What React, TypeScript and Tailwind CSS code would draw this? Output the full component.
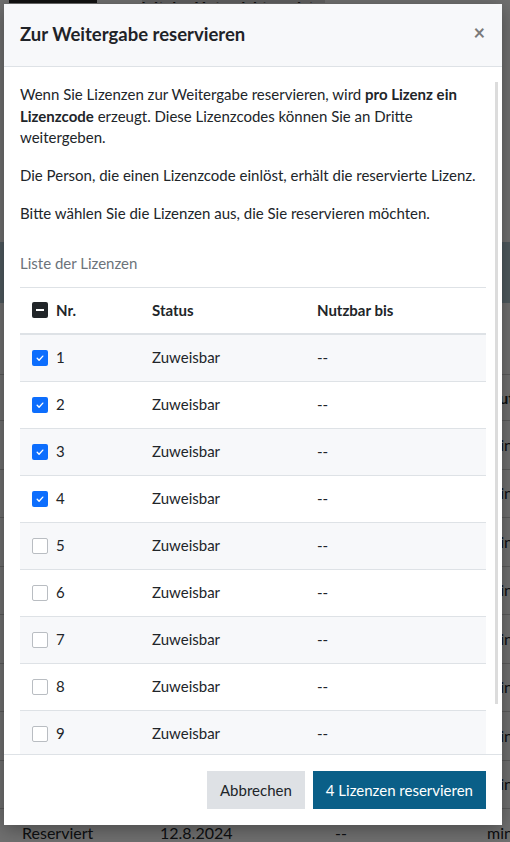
import React, { useState } from "react";

type Lizenz = {
  nr: number;
  status: string;
  nutzbarBis: string;
};

const lizenzen: Lizenz[] = Array.from({ length: 10 }, (_, i) => ({
  nr: i + 1,
  status: "Zuweisbar",
  nutzbarBis: "--",
}));

const hintergrundZeilen = Array.from({ length: 8 }, (_, i) => i);

function Checkbox({ state }: { state: "checked" | "unchecked" | "mixed" }) {
  if (state === "checked") {
    return (
      <span className="flex h-4 w-4 shrink-0 items-center justify-center rounded-[2px] bg-[#0d6efd]">
        <svg viewBox="0 0 16 16" className="h-[10px] w-[10px]" fill="none">
          <path
            d="M3.5 8.5l3 3 6-6.5"
            stroke="white"
            strokeWidth="2.2"
            strokeLinecap="round"
            strokeLinejoin="round"
          />
        </svg>
      </span>
    );
  }

  if (state === "mixed") {
    return (
      <span className="flex h-4 w-4 shrink-0 items-center justify-center rounded-[2px] bg-[#212529]">
        <span className="h-[2px] w-[8px] bg-white" />
      </span>
    );
  }

  return (
    <span className="h-4 w-4 shrink-0 rounded-[2px] border border-[#b9bdc2] bg-white" />
  );
}

export default function App() {
  const [ausgewaehlt] = useState<number[]>([1, 2, 3, 4]);

  return (
    <div className="relative h-[842px] w-full overflow-hidden bg-white font-[Lato,'Open_Sans',sans-serif] text-[#212529]">
      {/* Seite im Hintergrund */}
      <div className="flex h-[3px] items-end gap-[45px] overflow-hidden pl-[9px]">
        <div className="h-[3px] w-[88px] bg-[#2b2b2b]" />
        <div className="flex h-[3px] w-[183px] items-end justify-center overflow-hidden bg-[#dcdcdc]">
          <span className="-mb-[12px] whitespace-nowrap text-[16px] font-bold leading-[16px] text-[#222]">
            Digitaler Unterrichtsassistent
          </span>
        </div>
      </div>

      <div className="mt-[239px] h-[61px] bg-[#b4ccd8]" />

      <div className="mt-[71px] border-t border-[#cfcfcf]">
        <div className="grid h-[46px] grid-cols-[487px_1fr] items-center border-b border-[#cfcfcf] text-[16px] font-bold">
          <span />
          <span className="whitespace-nowrap">Nutzer</span>
        </div>
        {hintergrundZeilen.map((z) => (
          <div
            key={z}
            className="grid h-[48.5px] grid-cols-[487px_1fr] items-center border-b border-[#cfcfcf] text-[16px]"
          >
            <span />
            <span className="whitespace-nowrap">mindestens</span>
          </div>
        ))}
        <div className="grid h-[48.5px] grid-cols-[138px_175px_152px_1fr] items-center pl-[22px] text-[16px]">
          <span>Reserviert</span>
          <span>12.8.2024</span>
          <span>--</span>
          <span className="whitespace-nowrap">mindestens</span>
        </div>
      </div>

      {/* Overlay */}
      <div className="absolute inset-0 bg-black/[0.56]" />

      {/* Dialog */}
      <div className="absolute left-[4px] top-[4px] flex h-[821px] w-[498px] flex-col bg-white shadow-[0_4px_18px_rgba(0,0,0,0.35)]">
        <div className="flex h-[63px] shrink-0 items-center justify-between border-b border-[#dee2e6] bg-[#f7f8fa] pl-4 pr-[17px]">
          <h2 className="text-[18.5px] font-bold text-[#1f2328]">
            Zur Weitergabe reservieren
          </h2>
          <span className="-mt-[6px] text-[20px] font-bold leading-none text-[#7a7a7a]">
            ×
          </span>
        </div>

        <div className="relative min-h-0 flex-1">
          <div className="h-full overflow-y-auto px-4 pb-4 pt-[17px] [scrollbar-width:none]">
            <div className="text-[15px] leading-[21.5px]">
              <p className="mb-[16.5px]">
                Wenn Sie Lizenzen zur Weitergabe reservieren, wird{" "}
                <strong>pro Lizenz ein Lizenzcode</strong> erzeugt. Diese
                Lizenzcodes können Sie an Dritte weitergeben.
              </p>
              <p className="mb-[16.5px]">
                Die Person, die einen Lizenzcode einlöst, erhält die reservierte
                Lizenz.
              </p>
              <p>
                Bitte wählen Sie die Lizenzen aus, die Sie reservieren möchten.
              </p>
              <p className="mb-3 mt-[28.5px] text-[#6c737a]">
                Liste der Lizenzen
              </p>
            </div>

            <div className="text-[15px]">
              <div className="grid h-[48px] grid-cols-[120px_165px_1fr] items-center border-b-2 border-t border-[#dee2e6] font-bold">
                <div className="flex items-center gap-2 pl-3">
                  <Checkbox state="mixed" />
                  <span>Nr.</span>
                </div>
                <span className="pl-3">Status</span>
                <span className="pl-3">Nutzbar bis</span>
              </div>

              {lizenzen.map((l, i) => (
                <div
                  key={l.nr}
                  className={`grid h-[47px] grid-cols-[120px_165px_1fr] items-center border-b border-[#dee2e6] ${
                    i % 2 === 0 ? "bg-[#f7f8fa]" : "bg-white"
                  }`}
                >
                  <div className="flex items-center gap-2 pl-3">
                    <Checkbox
                      state={ausgewaehlt.includes(l.nr) ? "checked" : "unchecked"}
                    />
                    <span>{l.nr}</span>
                  </div>
                  <span className="pl-3">{l.status}</span>
                  <span className="pl-3">{l.nutzbarBis}</span>
                </div>
              ))}
            </div>
          </div>
          {/* Scrollbalken */}
          <div className="absolute right-[4px] top-[15px] h-[622px] w-[3px] bg-[#dcdcdc]" />
        </div>

        <div className="flex shrink-0 justify-end gap-2 border-t border-[#dee2e6] py-4 pr-4">
          <button className="h-[38px] bg-[#dee1e5] px-[13px] text-[15px] text-[#212529]">
            Abbrechen
          </button>
          <button className="h-[38px] bg-[#0a5f88] px-[13px] text-[15px] text-white">
            {ausgewaehlt.length} Lizenzen reservieren
          </button>
        </div>
      </div>
    </div>
  );
}
